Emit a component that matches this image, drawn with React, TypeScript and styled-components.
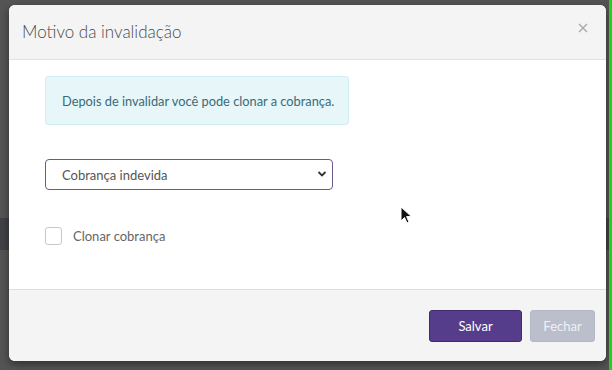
import React from "react";
import styled, { createGlobalStyle } from "styled-components";

const GlobalStyle = createGlobalStyle`
  html, body {
    margin: 0;
    padding: 0;
    background: #525252;
  }
  * {
    box-sizing: border-box;
  }
`;

const Page = styled.div`
  width: 612px;
  height: 370px;
  display: flex;
  overflow: hidden;
  position: relative;
  font-family: Lato, "Open Sans", sans-serif;
  background: linear-gradient(
    to bottom,
    #545454 0,
    #545454 218px,
    #404246 218px,
    #404246 250px,
    #545454 250px
  );
`;

const Stage = styled.div`
  flex: 1;
  padding: 5px 0 0 9px;
`;

const GreenEdge = styled.div`
  width: 3px;
  background: #19d419;
`;

const Modal = styled.div`
  width: 597px;
  height: 356px;
  background: #fff;
  border-radius: 6px;
  overflow: hidden;
  display: flex;
  flex-direction: column;
  box-shadow: 0 3px 9px rgba(0, 0, 0, 0.45);
`;

const Header = styled.div`
  height: 55px;
  flex: none;
  display: flex;
  align-items: center;
  justify-content: space-between;
  padding: 0 17px 2px 13px;
  background: #f4f4f4;
  border-bottom: 1px solid #e2e2e2;
`;

const Title = styled.h4`
  margin: 0;
  font-size: 17px;
  font-weight: 300;
  color: #4a4a4a;
`;

const CloseButton = styled.button`
  border: 0;
  background: none;
  padding: 0;
  width: 12px;
  height: 12px;
  display: flex;
  align-items: center;
  justify-content: center;
  margin-top: -6px;
  cursor: pointer;
`;

const Body = styled.div`
  flex: 1;
  padding: 16px 36px 0;
  display: flex;
  flex-direction: column;
  align-items: flex-start;
`;

const Alert = styled.div`
  width: 304px;
  height: 49px;
  display: flex;
  align-items: center;
  padding: 0 0 0 16px;
  background: #e6f6f9;
  border: 1px solid #cfeef3;
  border-radius: 3px;
  color: #3a6b78;
  font-size: 12.8px;
`;

const SelectWrap = styled.div`
  position: relative;
  margin-top: 34px;
  width: 288px;
  height: 31px;
`;

const Select = styled.select`
  width: 100%;
  height: 100%;
  appearance: none;
  -webkit-appearance: none;
  border: 1px solid #6a5a8c;
  border-radius: 4px;
  background: #fff;
  padding: 0 0 0 16px;
  font-family: Lato, "Open Sans", sans-serif;
  font-size: 13px;
  color: #555;
  outline: none;
`;

const Chevron = styled.svg`
  position: absolute;
  right: 6px;
  top: 11px;
  pointer-events: none;
`;

const CheckRow = styled.label`
  margin-top: 37px;
  display: flex;
  align-items: center;
  gap: 11px;
  font-size: 13px;
  color: #666;
  cursor: pointer;
`;

const CheckBox = styled.span`
  width: 17px;
  height: 18px;
  border: 1px solid #c8c8c8;
  border-radius: 3px;
  background: #fff;
`;

const Footer = styled.div`
  height: 72px;
  flex: none;
  background: #f4f4f4;
  border-top: 1px solid #dedede;
  display: flex;
  justify-content: flex-end;
  align-items: flex-start;
  gap: 8px;
  padding: 20px 11px 0 0;
`;

const Button = styled.button<{ $variant: "primary" | "muted" }>`
  height: 32px;
  border-radius: 3px;
  border: 1px solid
    ${(p) => (p.$variant === "primary" ? "#3f2b6e" : "#b3b8c6")};
  background: ${(p) => (p.$variant === "primary" ? "#563d8c" : "#bbbfcc")};
  color: ${(p) => (p.$variant === "primary" ? "#fff" : "#eef0f5")};
  font-family: Lato, "Open Sans", sans-serif;
  font-size: 13px;
  padding: 0;
  width: ${(p) => (p.$variant === "primary" ? "93px" : "65px")};
  cursor: pointer;
`;

const Cursor = styled.svg`
  position: absolute;
  left: 400px;
  top: 206px;
`;

export default function App() {
  return (
    <>
      <GlobalStyle />
      <Page>
        <Stage>
          <Modal>
            <Header>
              <Title>Motivo da invalidação</Title>
              <CloseButton aria-label="Fechar">
                <svg width="10" height="10" viewBox="0 0 10 10">
                  <path
                    d="M1 1 L9 9 M9 1 L1 9"
                    stroke="#a9a9a9"
                    strokeWidth="1.4"
                  />
                </svg>
              </CloseButton>
            </Header>
            <Body>
              <Alert>Depois de invalidar você pode clonar a cobrança.</Alert>
              <SelectWrap>
                <Select defaultValue="indevida">
                  <option value="indevida">Cobrança indevida</option>
                </Select>
                <Chevron width="10" height="8" viewBox="0 0 10 8">
                  <path
                    d="M1.5 2 L5 5.5 L8.5 2"
                    fill="none"
                    stroke="#333"
                    strokeWidth="1.8"
                  />
                </Chevron>
              </SelectWrap>
              <CheckRow>
                <CheckBox />
                Clonar cobrança
              </CheckRow>
            </Body>
            <Footer>
              <Button $variant="primary">Salvar</Button>
              <Button $variant="muted">Fechar</Button>
            </Footer>
          </Modal>
        </Stage>
        <GreenEdge />
        <Cursor width="13" height="19" viewBox="0 0 13 19">
          <path
            d="M1 1 L1 15 L4.5 11.5 L7 17 L9 16 L6.6 10.6 L11.5 10.6 Z"
            fill="#111"
            stroke="#fff"
            strokeWidth="1"
          />
        </Cursor>
      </Page>
    </>
  );
}
